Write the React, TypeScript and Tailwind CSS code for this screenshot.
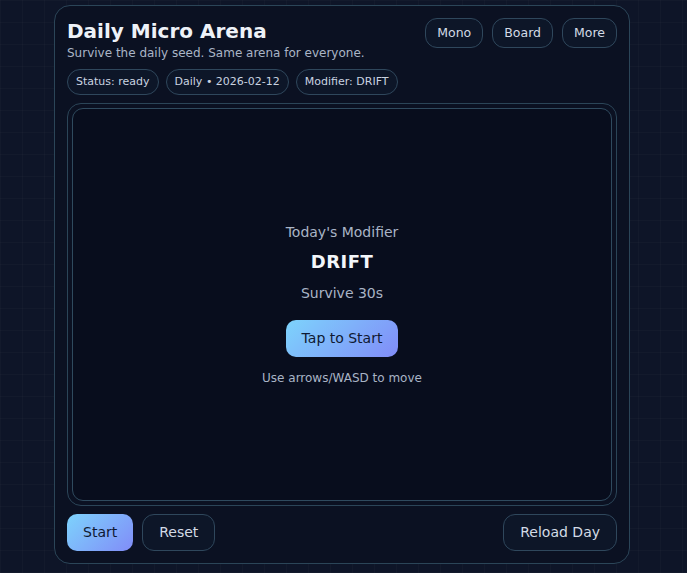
import React from "react";

const font = { fontFamily: '"DejaVu Sans", "Noto Sans", sans-serif' };

function Pill({ children }: { children: React.ReactNode }) {
  return (
    <span className="inline-flex h-[26px] items-center whitespace-nowrap rounded-full border border-[#2f475c] bg-[#0d1628] px-[8px] text-[11px] text-[#c9d3e0]">
      {children}
    </span>
  );
}

function GhostButton({ children, className = "" }: { children: React.ReactNode; className?: string }) {
  return (
    <button
      className={
        "inline-flex items-center justify-center whitespace-nowrap rounded-[12px] border border-[#2f475c] bg-[#0d1628] text-[#d3dbe6] " +
        className
      }
    >
      {children}
    </button>
  );
}

export default function App() {
  return (
    <div
      style={font}
      className="min-h-[573px] w-full bg-[#0e1528] bg-[linear-gradient(rgba(255,255,255,0.018)_1px,transparent_1px),linear-gradient(90deg,rgba(255,255,255,0.018)_1px,transparent_1px)] bg-[size:22px_22px] pt-[5px]"
    >
      <div className="ml-[54px] flex h-[559px] w-[576px] flex-col rounded-[16px] border border-[#2b4558] bg-[#0b1122] px-[12px] pt-[12px] pb-[12px]">
        <div className="flex items-start justify-between">
          <div className="shrink-0">
            <h1 className="text-[20px] leading-[26px] font-bold text-[#eef2f8]">Daily Micro Arena</h1>
            <p className="mt-[1px] text-[12px] leading-[16px] text-[#aab5c6]">
              Survive the daily seed. Same arena for everyone.
            </p>
            <div className="mt-[8px] flex gap-[7px]">
              <Pill>Status: ready</Pill>
              <Pill>Daily • 2026-02-12</Pill>
              <Pill>Modifier: DRIFT</Pill>
            </div>
          </div>
          <div className="flex gap-[9px]">
            <GhostButton className="h-[30px] px-[11px] text-[12.5px]">Mono</GhostButton>
            <GhostButton className="h-[30px] px-[11px] text-[12.5px]">Board</GhostButton>
            <GhostButton className="h-[30px] px-[11px] text-[12.5px]">More</GhostButton>
          </div>
        </div>

        <div className="mt-[8px] flex-1 rounded-[14px] border border-[#2b4558] p-[4px]">
          <div className="flex h-full flex-col items-center justify-center rounded-[11px] border border-[#2f4a5e] bg-[#080d1d]">
            <p className="text-[14px] text-[#a9b4c6]">Today&apos;s Modifier</p>
            <p className="mt-[5px] text-[18px] font-bold tracking-[0.5px] text-[#f3f6fa]">DRIFT</p>
            <p className="mt-[8px] text-[14px] text-[#a9b4c6]">Survive 30s</p>
            <button className="mt-[16px] h-[37px] rounded-[10px] bg-[linear-gradient(135deg,#7dd3fc,#818cf8)] px-[16px] text-[14px] text-[#0f1a33]">
              Tap to Start
            </button>
            <p className="mt-[12px] text-[12px] text-[#a9b4c6]">Use arrows/WASD to move</p>
          </div>
        </div>

        <div className="mt-[8px] flex items-center justify-between">
          <div className="flex gap-[9px]">
            <button className="h-[37px] rounded-[10px] bg-[linear-gradient(135deg,#7dd3fc,#818cf8)] px-[16px] text-[14px] text-[#0f1a33]">
              Start
            </button>
            <GhostButton className="h-[37px] px-[16px] text-[14px]">Reset</GhostButton>
          </div>
          <GhostButton className="h-[37px] px-[16px] text-[14px]">Reload Day</GhostButton>
        </div>
      </div>
    </div>
  );
}
